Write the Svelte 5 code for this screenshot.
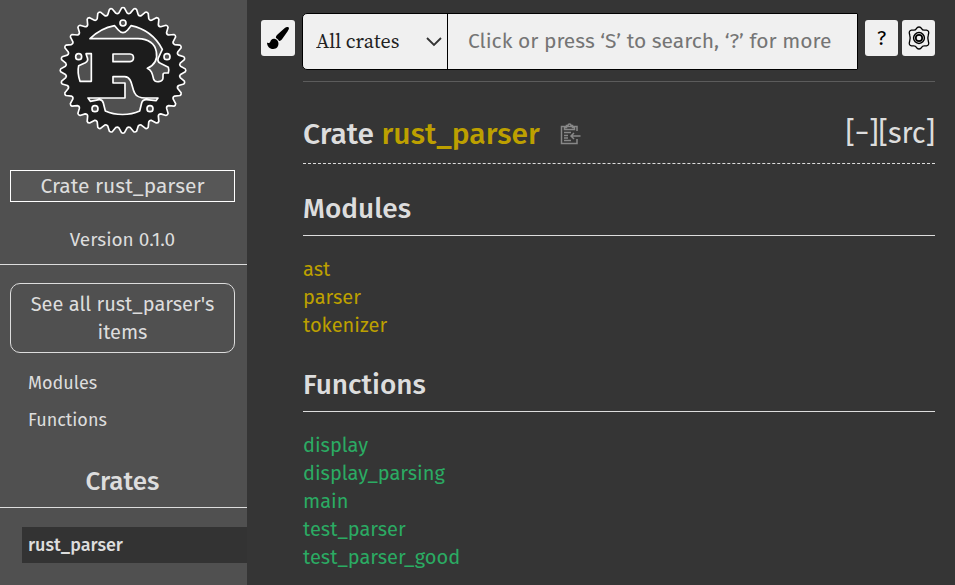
<script>
  const modules = ['ast', 'parser', 'tokenizer'];
  const functions = ['display', 'display_parsing', 'main', 'test_parser', 'test_parser_good'];
  const sections = [
    { id: 'modules', title: 'Modules', kind: 'mod', items: modules },
    { id: 'functions', title: 'Functions', kind: 'fn', items: functions },
  ];
  const bolts = [[217, 69], [84, 170], [349, 170], [133, 326], [298, 326]];

  // Outline of a cog with rounded teeth.
  function cog(cx, cy, outer, inner, teeth) {
    const at = (r, a) => `${(cx + r * Math.sin(a)).toFixed(1)},${(cy - r * Math.cos(a)).toFixed(1)}`;
    const step = (2 * Math.PI) / teeth;
    let d = `M${at(outer, -step * 0.12)}`;
    for (let i = 0; i < teeth; i++) {
      const a = i * step;
      d += ` Q${at(outer + 3, a)} ${at(outer, a + step * 0.12)} L${at(inner, a + step * 0.36)}`;
      d += ` Q${at(inner - 4, a + step * 0.5)} ${at(inner, a + step * 0.64)} L${at(outer, a + step * 0.88)}`;
    }
    return d + 'Z';
  }
</script>

<div class="page">
  <nav class="sidebar" aria-label="Crate navigation">
    <a class="logo" href="#top" aria-label="Rust">
      <svg viewBox="22 15 390 390" width="130" height="130" aria-hidden="true">
        <g stroke="#fff" stroke-width="5" stroke-linejoin="round">
          <path fill="#1c1c1c" d={cog(217, 211, 187, 173, 32)} />
          <g fill="#505050">
            <path d="M118 116C140 94 165 82 192 77L203 90Q217 106 231 90L241 77C285 86 316 112 335 148L323 174C320 182 323 187 329 190L353 202Q356 211 353 219H342Q337 219 337 225V234C336 247 313 249 309 238C305 222 304 212 290 205C312 195 321 176 317 155C312 128 288 117 262 116Z" />
            <path d="M106 161H122V244H88C82 226 81 210 84 197L104 188Q114 183 110 173Z" />
            <path d="M187 162H238C252 163 252 184 238 185H187Z" />
            <path d="M187 230H222C246 232 242 262 252 279C258 292 270 294 285 294H322L316 302L288 299Q276 298 273 309L267 333C237 347 194 347 164 333L158 309Q155 298 145 299L119 304L112 294H223V249H187Z" />
            {#each bolts as [x, y]}
              <circle cx={x} cy={y} r="9" />
            {/each}
          </g>
        </g>
      </svg>
    </a>
    <p class="location">Crate rust_parser</p>
    <p class="version">Version 0.1.0</p>
    <div class="elements">
      <a class="all" href="#all">See all rust_parser's items</a>
      <ul class="jump">
        {#each sections as s}
          <li><a href={'#' + s.id}>{s.title}</a></li>
        {/each}
      </ul>
    </div>
    <h2 class="crates">Crates</h2>
    <a class="current" href="#top">rust_parser</a>
  </nav>

  <main id="top">
    <form class="search" onsubmit={(e) => e.preventDefault()}>
      <button class="tool theme" type="button" aria-label="Pick another theme">
        <svg width="24" height="24" viewBox="0 0 24 24" aria-hidden="true">
          <path d="M22.5 1.3C21.5.5 20 1 18.500 2.200L11.500 8.500C10 10 9.700 11 10 12C11 12.600 12.500 13.700 13 15C14 15.200 15 14.500 16 13.300L21.500 5.500C22.800 3.600 23.500 2.200 22.500 1.300ZM8.500 12.800C6 12.500 4.700 14 4.200 16C3.700 17.200 2.600 17.300 1 16.500C1.200 20.500 3.500 23 7.200 23C10.800 23 12.800 20.500 12.400 16.800C12 14.500 10.500 13 8.500 12.800Z" />
        </svg>
      </button>
      <div class="box">
        <div class="pick">
          <select aria-label="Crate to search">
            <option>All crates</option>
            <option>rust_parser</option>
          </select>
          <svg width="18" height="12" viewBox="0 0 18 12" aria-hidden="true">
            <path d="M2 2L9 9L16 2" fill="none" stroke="#333" stroke-width="1.8" />
          </svg>
        </div>
        <input type="search" aria-label="Search" placeholder="Click or press ‘S’ to search, ‘?’ for more options…" />
      </div>
      <div class="tools">
        <button class="tool" type="button" aria-label="Help">?</button>
        <a class="tool" href="#settings" aria-label="Settings">
          <svg width="24" height="24" viewBox="0 0 24 24" fill="none" stroke="#000" aria-hidden="true">
            <path stroke-width="1.300" stroke-linejoin="round" d="M12 1C13.200 1 14 1.500 14.600 2.600C15.200 3.700 16.200 4.200 17.500 4.100L19.500 4.100C21 4.400 22 5.600 21.700 7L21.200 9.500C20.900 10.600 20.900 13.400 21.200 14.500L21.700 17C22 18.400 21 19.600 19.500 19.900L17.500 19.900C16.200 19.800 15.200 20.300 14.600 21.400C14 22.500 13.200 23 12 23C10.800 23 10 22.500 9.400 21.400C8.800 20.300 7.800 19.800 6.500 19.900L4.500 19.900C3 19.600 2 18.400 2.300 17L2.800 14.500C3.100 13.400 3.100 10.600 2.800 9.500L2.300 7C2 5.600 3 4.400 4.500 4.100L6.500 4.100C7.800 4.200 8.800 3.700 9.400 2.600C10 1.500 10.800 1 12 1Z" />
            <circle cx="12" cy="12" r="5.400" stroke-width="1.500" />
            <circle cx="12" cy="12" r="3.200" stroke-width="1.700" />
          </svg>
        </a>
      </div>
    </form>

    <div class="content">
      <header>
        <h1>Crate <a href="#top">rust_parser</a></h1>
        <button class="copy" type="button" aria-label="Copy item path">
          <svg width="21" height="22" viewBox="0 0 21 22" fill="none" stroke="#888" stroke-width="1.500" aria-hidden="true">
            <path d="M17 8V3.500H1.500V20.500H17V16M4.500 6.500V4.500H6.500V2.500H8C8 .5 11 .5 11 2.500H12.500V4.500H14.500V6.500ZM4 9.500H11M4 12.500H8M4 15H8M4 17.500H11M20.500 13H11M14 10L11 13L14 16" />
          </svg>
        </button>
        <span class="out"><button type="button" aria-label="Collapse all docs">[−]</button><a href="#src">[src]</a></span>
      </header>
      {#each sections as s}
        <h2 id={s.id}>{s.title}</h2>
        <ul class="items">
          {#each s.items as item}
            <li><a class={s.kind} href={'#' + item}>{item}</a></li>
          {/each}
        </ul>
      {/each}
    </div>
  </main>
</div>

<style>
  :global(body) {
    margin: 0;
    background: #353535;
  }
  .page {
    display: flex;
    min-height: 100vh;
    box-sizing: border-box;
    font: 20px/28px "Fira Sans", "Noto Sans", sans-serif;
    color: #ddd;
  }
  a {
    color: inherit;
    text-decoration: none;
  }
  p, h1, h2, ul {
    margin: 0;
    padding: 0;
  }
  ul {
    list-style: none;
  }
  button {
    font: inherit;
    color: inherit;
    padding: 0;
    border: 0;
    background: none;
    cursor: pointer;
  }
  svg {
    display: block;
  }
  .sidebar {
    flex: none;
    width: 247px;
    background: #505050;
  }
  .logo {
    display: flex;
    justify-content: center;
    padding: 5px 2px 0 0;
  }
  .location {
    margin: 35px 12px 0 10px;
    border: 1px solid #fff;
    background: #575757;
    font-size: 21px;
    line-height: 30px;
    text-align: center;
  }
  .version {
    padding: 24px 2px 10px 0;
    border-bottom: 1px solid #ddd;
    font-size: 19px;
    text-align: center;
  }
  .elements {
    padding: 18px 12px 0 10px;
  }
  .all {
    display: block;
    padding: 6px 10px;
    border: 1px solid #ddd;
    border-radius: 10px;
    text-align: center;
  }
  .jump {
    padding: 12px 0 0 18px;
    font-size: 18px;
    line-height: 37px;
  }
  .crates {
    margin-top: 25px;
    padding: 0 2px 7px 0;
    border-bottom: 1px solid #ddd;
    font-size: 26px;
    font-weight: 500;
    line-height: 36px;
    text-align: center;
  }
  .current {
    display: block;
    margin: 19px 0 0 22px;
    padding-left: 6px;
    background: #333;
    font-size: 18px;
    font-weight: 500;
    line-height: 36px;
  }
  main {
    flex: 1;
    min-width: 0;
    padding: 13px 20px 0 14px;
  }
  .search {
    display: flex;
    align-items: flex-start;
    gap: 7px;
  }
  .tool {
    display: flex;
    align-items: center;
    justify-content: center;
    flex: none;
    width: 33px;
    height: 36px;
    margin-top: 7px;
    border-radius: 3px;
    background: #f0f0f0;
    color: #000;
  }
  .theme {
    width: 34px;
  }
  .tools {
    display: flex;
    gap: 4px;
  }
  .box {
    display: flex;
    flex: 1;
    min-width: 0;
    height: 57px;
    box-sizing: border-box;
    border: 1px solid #000;
    border-radius: 5px 1px 1px 5px;
    background: #f0f0f0;
    overflow: hidden;
  }
  .pick {
    display: grid;
    flex: none;
    width: 144px;
    border-right: 1px solid #000;
  }
  .pick > * {
    grid-area: 1 / 1;
  }
  .pick svg {
    place-self: center end;
    margin-right: 4px;
    pointer-events: none;
  }
  select {
    appearance: none;
    width: 100%;
    padding: 0 30px 2px 13px;
    border: 0;
    background: none;
    color: #222;
    font: 20px "Source Serif Pro", "Source Serif 4", "Noto Serif CJK SC", "Noto Serif CJK JP", "Noto Serif", "Liberation Serif", serif;
  }
  input {
    flex: 1;
    min-width: 0;
    padding: 0 20px 2px 20px;
    border: 0;
    background: none;
    color: #111;
    font: inherit;
    font-size: 21px;
  }
  input::-webkit-search-cancel-button {
    display: none;
  }
  input::placeholder {
    color: #757575;
  }
  .content {
    margin: 11px 0 0 42px;
    border-top: 1px solid #5c5c5c;
  }
  header {
    display: flex;
    align-items: center;
    padding: 23px 0 0;
    border-bottom: 1px dashed #ddd;
    line-height: 58px;
  }
  h1 {
    font-size: 30px;
    font-weight: 500;
  }
  h1 a, .mod {
    color: #bda000;
  }
  .copy {
    margin-left: 20px;
  }
  .out {
    margin-left: auto;
    font-size: 29px;
  }
  .content h2 {
    padding: 25px 0 6px;
    border-bottom: 1px solid #ddd;
    font-size: 28px;
    font-weight: 500;
    line-height: 40px;
  }
  .items {
    padding: 19px 0 1px;
  }
  .fn {
    color: #2bab63;
  }
</style>
